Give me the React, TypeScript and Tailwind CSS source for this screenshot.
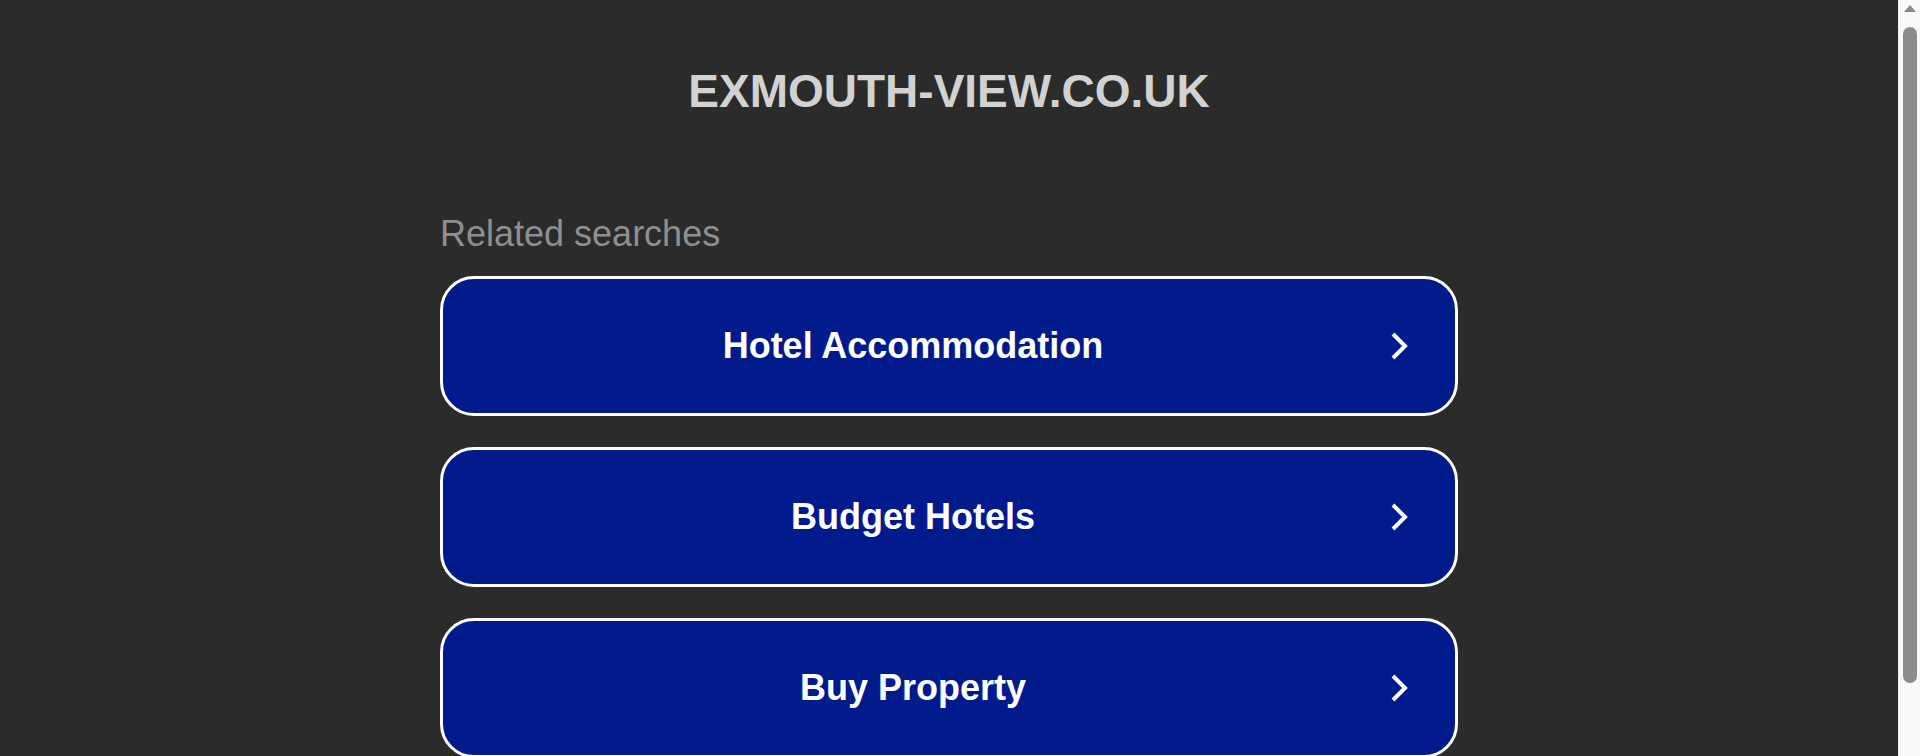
import React from "react";

const searches = ["Hotel Accommodation", "Budget Hotels", "Buy Property"];

function Chevron() {
  return (
    <svg width="20" height="30" viewBox="0 0 20 30" fill="none">
      <polyline
        points="4,3 16,15 4,27"
        stroke="#ffffff"
        strokeWidth="4"
        strokeLinejoin="miter"
      />
    </svg>
  );
}

// window scrollbar at the right edge (up arrow + thumb)
function ScrollBar() {
  return (
    <div className="flex w-[22px] shrink-0 flex-col items-center border-l border-[#ececec] bg-[#f8f8f8] pt-[5px]">
      <svg width="12" height="7" viewBox="0 0 12 7">
        <polygon points="6,0 12,7 0,7" fill="#8a8a8a" />
      </svg>
      <div className="mt-[15px] h-[656px] w-[14px] rounded-full bg-[#8c8c8c]" />
    </div>
  );
}

export default function App() {
  return (
    <div className="flex h-screen overflow-hidden bg-[#2b2b2b] font-['Liberation_Sans',Arial,sans-serif]">
      <main className="flex-1 overflow-y-auto [scrollbar-width:none]">
        <div className="pt-[68px] pb-[50px]">
          <h1 className="text-center text-[46px] leading-none font-bold text-[#d2d2d2]">
            EXMOUTH-VIEW.CO.UK
          </h1>

          <div className="mx-auto w-[1018px] mt-[102px]">
            <p className="text-[36px] leading-none text-[#8f8f8f]">Related searches</p>

            <div className="mt-[24px] flex flex-col gap-[31px]">
              {searches.map((item) => (
                <a
                  key={item}
                  href="#"
                  className="flex h-[140px] items-center rounded-[34px] border-[3px] border-white bg-[#011a8c] pr-[46px]"
                >
                  <span className="flex-1 pr-[6px] text-center text-[36px] leading-none font-bold text-white">
                    {item}
                  </span>
                  <Chevron />
                </a>
              ))}
            </div>
          </div>
        </div>
      </main>
      <ScrollBar />
    </div>
  );
}
